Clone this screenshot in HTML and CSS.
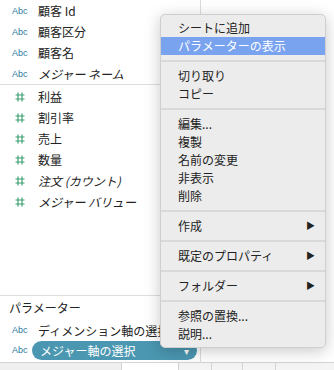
FILE: index.html
```html
<!DOCTYPE html>
<html lang="ja">
<head>
    <meta charset="UTF-8">
    <title>データ ペイン</title>
    <link rel="stylesheet" href="styles.css">
</head>
<body>
    <div class="app">
        <div class="workspace">
            <div class="sidebar">
                <div class="fields">
                    <div class="group dims">
                        <div class="field"><span class="abc">Abc</span>顧客 Id</div>
                        <div class="field"><span class="abc">Abc</span>顧客区分</div>
                        <div class="field"><span class="abc">Abc</span>顧客名</div>
                        <div class="field calc"><span class="abc">Abc</span>メジャー ネーム</div>
                    </div>
                    <div class="group measures">
                        <div class="field"><svg class="num" viewBox="0 0 10 10"><path d="M3 0.5V9.5M7 0.5V9.5M0.5 3H9.5M0.5 7H9.5"/></svg>利益</div>
                        <div class="field"><svg class="num" viewBox="0 0 10 10"><path d="M3 0.5V9.5M7 0.5V9.5M0.5 3H9.5M0.5 7H9.5"/></svg>割引率</div>
                        <div class="field"><svg class="num" viewBox="0 0 10 10"><path d="M3 0.5V9.5M7 0.5V9.5M0.5 3H9.5M0.5 7H9.5"/></svg>売上</div>
                        <div class="field"><svg class="num" viewBox="0 0 10 10"><path d="M3 0.5V9.5M7 0.5V9.5M0.5 3H9.5M0.5 7H9.5"/></svg>数量</div>
                        <div class="field calc"><svg class="num" viewBox="0 0 10 10"><path d="M3 0.5V9.5M7 0.5V9.5M0.5 3H9.5M0.5 7H9.5"/></svg>注文 (カウント)</div>
                        <div class="field calc"><svg class="num" viewBox="0 0 10 10"><path d="M3 0.5V9.5M7 0.5V9.5M0.5 3H9.5M0.5 7H9.5"/></svg>メジャー バリュー</div>
                    </div>
                </div>
                <div class="params">
                    <div class="params-title">パラメーター</div>
                    <div class="field"><span class="abc">Abc</span>ディメンション軸の選択</div>
                    <div class="field"><span class="abc">Abc</span><span class="pill">メジャー軸の選択<span class="pill-arrow">▾</span></span></div>
                </div>
            </div>
            <div class="view"></div>
        </div>
        <div class="tabs">
            <div class="tab t1"></div>
            <div class="tab t2"></div>
            <div class="tab t3"></div>
            <div class="tab t4"></div>
            <div class="tab t5"></div>
            <div class="tab t6"></div>
        </div>

        <!-- context menu over the pane -->
        <div class="menu">
            <div class="item">シートに追加</div>
            <div class="item active">パラメーターの表示</div>
            <div class="sep"></div>
            <div class="item">切り取り</div>
            <div class="item">コピー</div>
            <div class="sep"></div>
            <div class="item">編集...</div>
            <div class="item">複製</div>
            <div class="item">名前の変更</div>
            <div class="item">非表示</div>
            <div class="item">削除</div>
            <div class="sep"></div>
            <div class="item sub">作成<span class="arrow">▶</span></div>
            <div class="sep"></div>
            <div class="item sub">既定のプロパティ<span class="arrow">▶</span></div>
            <div class="sep"></div>
            <div class="item sub">フォルダー<span class="arrow">▶</span></div>
            <div class="sep"></div>
            <div class="item">参照の置換...</div>
            <div class="item">説明...</div>
        </div>
    </div>
</body>
</html>
```

FILE: styles.css
```css
/* data pane + context menu */
body {
    margin: 0;
    font-family: "Noto Sans CJK JP", "Liberation Sans", sans-serif;
    font-size: 12px;
    color: #222;
    background: #fff;
}

.app {
    position: relative;
    width: 334px;
    height: 370px;
    display: flex;
    flex-direction: column;
    overflow: hidden;
}

.workspace {
    flex: 1;
    display: flex;
    min-height: 0;
}

.sidebar {
    width: 200px;
    border-right: 1px solid #dcdcdc;
    display: flex;
    flex-direction: column;
}

.fields {
    flex: 1;
}

.dims {
    border-bottom: 1px solid #dedede;
}

.measures {
    padding-top: 1px;
}

.field {
    height: 21px;
    display: flex;
    align-items: center;
    white-space: nowrap;
    overflow: hidden;
}

.calc {
    font-style: italic;
}

.abc {
    width: 38px;
    padding-left: 12px;
    box-sizing: border-box;
    flex: none;
    font-family: "Liberation Sans", sans-serif;
    font-size: 9px;
    font-style: normal;
    color: #2b7aa1;
}

.num {
    width: 10px;
    height: 10px;
    margin: 0 13px 0 15px;
    flex: none;
    fill: none;
    stroke: #3f9f73;
    stroke-width: 1.2;
}

.params {
    border-top: 1px solid #dedede;
    height: 66px;
}

.params-title {
    height: 24px;
    line-height: 24px;
    padding-left: 9px;
}

.params .field {
    height: 20px;
}

.pill {
    display: flex;
    align-items: center;
    justify-content: space-between;
    margin-left: -6px;
    width: 165px;
    height: 19px;
    padding: 0 8px;
    box-sizing: border-box;
    border-radius: 10px;
    background: #4b97b1;
    color: #fff;
}

.pill-arrow {
    font-size: 10px;
}

.view {
    flex: 1;
}

.tabs {
    height: 7px;
    display: flex;
    border-top: 1px solid #d4d4d4;
    background: #f4f4f4;
}

.tab {
    border-right: 1px solid #d4d4d4;
}

.t1 { width: 121px; background: #efefef; }
.t2 { width: 56px; background: #fff; }
.t3 { width: 32px; }
.t4 { width: 30px; }
.t5 { width: 32px; }
.t6 { flex: 1; border-right: none; }

.menu {
    position: absolute;
    left: 160px;
    top: 14px;
    width: 166px;
    padding: 4px 0;
    box-sizing: border-box;
    background: #ececec;
    border: 1px solid #cfcfcf;
    border-radius: 5px;
    box-shadow: 0 3px 16px rgba(0, 0, 0, 0.22);
}

.item {
    height: 18px;
    line-height: 18px;
    padding: 0 10px 0 17px;
    display: flex;
    justify-content: space-between;
    color: #222;
}

.item.active {
    background: #7aa3ef;
    color: #fff;
}

.arrow {
    font-size: 9px;
    color: #222;
}

.sep {
    height: 2px;
    margin: 5px 0;
    background: #d9d9d9;
}
```
